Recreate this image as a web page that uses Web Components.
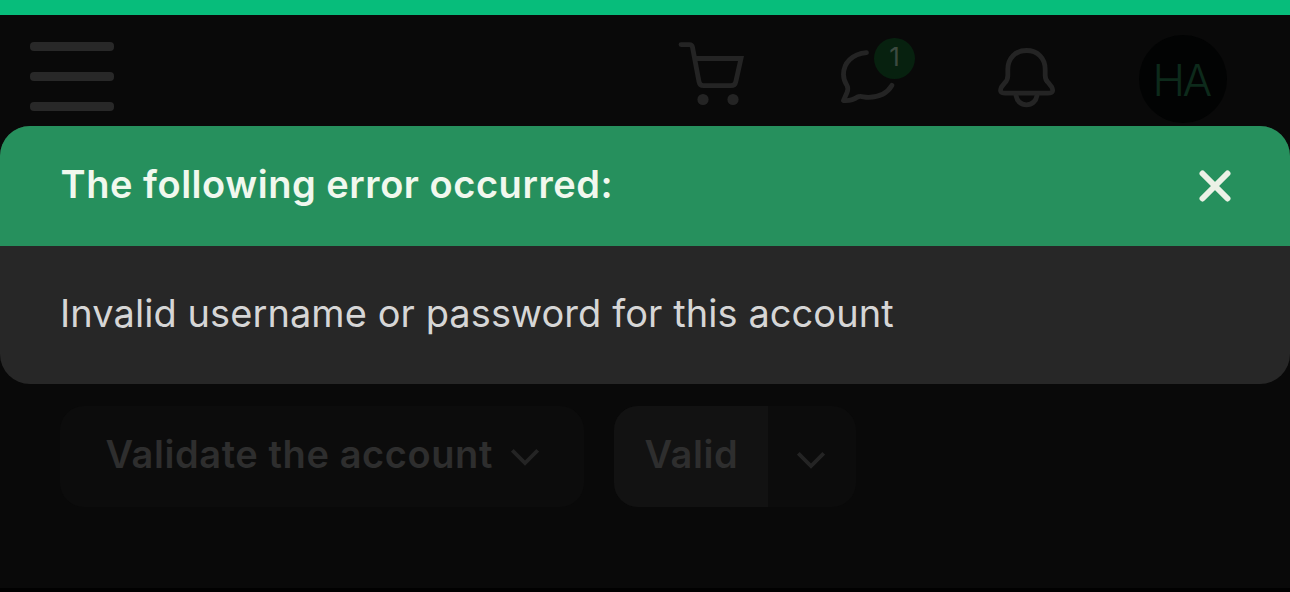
<!DOCTYPE html>
<html lang="en">
<head>
  <meta charset="utf-8">
  <title>Account</title>
  <style>
    body {
      margin: 0;
      background: #090909;
      font-family: Inter, "Liberation Sans", sans-serif;
      overflow: hidden;
    }
  </style>
</head>
<body>
  <account-page>
    <top-bar slot="header">
      <nav-icon name="cart"></nav-icon>
      <nav-icon name="chat"><count-badge>1</count-badge></nav-icon>
      <nav-icon name="bell"></nav-icon>
      <user-avatar>HA</user-avatar>
    </top-bar>
    <error-alert>
      <span slot="title">The following error occurred:</span>
      Invalid username or password for this account
    </error-alert>
    <action-bar>
      <drop-button>Validate the account</drop-button>
      <split-button>Valid</split-button>
    </action-bar>
  </account-page>

  <script>
    const CHEVRON = `
      <svg width="28" height="18" viewBox="0 0 28 18" fill="none" stroke="#242424" stroke-width="3.8">
        <path d="M1.3 2.3 14 15 26.7 2.3"/>
      </svg>`;

    const ICONS = {
      cart: `
        <path d="M8 8.600h8.500q2.500 0 3 2.600l6.500 34.500q.8 4 4.500 4h27.500q4 0 4.800-4L68 22.500H22" stroke-linejoin="miter"/>
        <circle cx="30" cy="63.500" r="5.600" fill="#242424" stroke="none"/>
        <circle cx="60" cy="63.500" r="5.600" fill="#242424" stroke="none"/>`,
      chat: `
        <path d="M36.500 16.700C22 18 13.500 27 13.500 38.500c0 4.500 1.500 8 3.500 11 1.500 2.500 1 4.500 0 7l-3.500 8c5.500.5 10-.5 14-3.500 3-1.500 6 .3 11 .3 11 0 19-4.300 23.500-12"/>`,
      bell: `
        <path d="M20.800 39.500V33.500C20.800 22 28.500 14.500 39.500 14.500S58.200 22 58.200 33.500v6q0 4.500 3 7l3.500 4.500q3 6.200-3.500 6.200H18q-6.500 0-3.500-6.200l3.500-4.500q2.800-2.500 2.800-7z"/>
        <path d="M29 59.500c1 6 5 9.300 10.500 9.300S49 65.500 50 59.500"/>`
    };

    class AccountPage extends HTMLElement {
      constructor() {
        super();
        this.attachShadow({ mode: 'open' });
        this.shadowRoot.innerHTML = `
          <style>
            :host {
              display: flex;
              flex-direction: column;
              box-sizing: border-box;
              height: 592px;
              border-top: 15px solid #07bd7b;
              border-bottom: 4px solid #010101;
            }
          </style>
          <slot name="header"></slot>
          <slot></slot>
        `;
      }
    }

    class TopBar extends HTMLElement {
      constructor() {
        super();
        this.attachShadow({ mode: 'open' });
        this.shadowRoot.innerHTML = `
          <style>
            :host {
              display: flex;
              justify-content: space-between;
              box-sizing: border-box;
              flex: none;
              height: 111px;
              padding: 21px 63px 0 30px;
            }
            .menu {
              display: flex;
              flex-direction: column;
              gap: 21px;
              width: 84px;
              padding: 6px 0 0;
              border: none;
              background: none;
            }
            .menu span {
              height: 9px;
              border-radius: 4px;
              background: #282828;
            }
            .tools {
              display: flex;
              align-items: center;
              gap: 77px;
              height: 80px;
            }
          </style>
          <button class="menu" aria-label="Menu"><span></span><span></span><span></span></button>
          <div class="tools"><slot></slot></div>
        `;
      }
    }

    class NavIcon extends HTMLElement {
      constructor() {
        super();
        this.attachShadow({ mode: 'open' });
      }

      connectedCallback() {
        this.shadowRoot.innerHTML = `
          <style>
            :host {
              display: block;
              position: relative;
              width: 80px;
              height: 80px;
            }
            svg {
              display: block;
            }
            ::slotted(*) {
              position: absolute;
              top: 2px;
              right: -5px;
            }
          </style>
          <svg width="80" height="80" viewBox="0 0 80 80" fill="none" stroke="#242424"
            stroke-width="4.8" stroke-linecap="round" stroke-linejoin="round">
            ${ICONS[this.getAttribute('name')]}
          </svg>
          <slot></slot>
        `;
      }
    }

    class CountBadge extends HTMLElement {
      constructor() {
        super();
        this.attachShadow({ mode: 'open' });
        this.shadowRoot.innerHTML = `
          <style>
            :host {
              display: block;
              box-sizing: border-box;
              width: 41px;
              height: 41px;
              border-radius: 50%;
              background: #07210f;
              color: #3c4a40;
              font-size: 26px;
              line-height: 38px;
              text-align: center;
            }
          </style>
          <slot></slot>
        `;
      }
    }

    class UserAvatar extends HTMLElement {
      constructor() {
        super();
        this.attachShadow({ mode: 'open' });
        this.shadowRoot.innerHTML = `
          <style>
            :host {
              display: block;
              width: 88px;
              height: 88px;
              margin: 6px 0 0 -5px;
              border-radius: 50%;
              background: #020303;
              color: #0d2a1b;
              font-size: 44px;
              font-weight: 300;
              line-height: 90px;
              letter-spacing: -2.5px;
              text-align: center;
              text-indent: -4px;
            }
          </style>
          <slot></slot>
        `;
      }
    }

    class ErrorAlert extends HTMLElement {
      constructor() {
        super();
        this.attachShadow({ mode: 'open' });
        this.shadowRoot.innerHTML = `
          <style>
            :host {
              display: block;
              flex: none;
              border-radius: 30px;
              overflow: hidden;
              background: #272727;
            }
            header {
              display: flex;
              align-items: center;
              justify-content: space-between;
              height: 120px;
              padding: 0 59px 0 60.5px;
              background: #26905d;
            }
            .title {
              padding-bottom: 4px;
              color: #f1f8ee;
              font-size: 38px;
              font-weight: 600;
              letter-spacing: 0.54px;
              white-space: nowrap;
            }
            button {
              display: flex;
              padding: 0;
              border: none;
              background: none;
            }
            .message {
              display: flex;
              align-items: center;
              box-sizing: border-box;
              height: 138px;
              padding: 0 60px 4px;
              color: #d6d6d6;
              font-size: 38px;
              letter-spacing: 0.07px;
              white-space: nowrap;
            }
          </style>
          <header role="alert">
            <div class="title"><slot name="title"></slot></div>
            <button aria-label="Close">
              <svg width="32" height="32" viewBox="0 0 32 32" stroke="#ecf1e6" stroke-width="6" stroke-linecap="round">
                <path d="M3.500 3.500l25 25M28.500 3.500l-25 25"/>
              </svg>
            </button>
          </header>
          <div class="message"><div><slot></slot></div></div>
        `;
      }
    }

    class ActionBar extends HTMLElement {
      constructor() {
        super();
        this.attachShadow({ mode: 'open' });
        this.shadowRoot.innerHTML = `
          <style>
            :host {
              display: flex;
              gap: 30px;
              padding: 22px 60px;
              color: #2e2e2e;
              font-size: 38px;
              font-weight: 600;
              letter-spacing: 0.58px;
              white-space: nowrap;
            }
          </style>
          <slot></slot>
        `;
      }
    }

    class DropButton extends HTMLElement {
      constructor() {
        super();
        this.attachShadow({ mode: 'open' });
        this.shadowRoot.innerHTML = `
          <style>
            :host {
              display: flex;
              align-items: center;
              justify-content: space-between;
              box-sizing: border-box;
              width: 524px;
              height: 101px;
              padding: 0 45px 6px 45.5px;
              border-radius: 24px;
              background: #0c0c0c;
            }
            svg {
              margin-top: 7px;
            }
          </style>
          <span><slot></slot></span>
          ${CHEVRON}
        `;
      }
    }

    class SplitButton extends HTMLElement {
      constructor() {
        super();
        this.attachShadow({ mode: 'open' });
        this.shadowRoot.innerHTML = `
          <style>
            :host {
              display: flex;
              width: 242px;
              height: 101px;
              border-radius: 24px;
              overflow: hidden;
              background: #0c0c0c;
            }
            .label {
              display: flex;
              align-items: center;
              box-sizing: border-box;
              width: 154px;
              padding: 0 0 6px 30.5px;
              background: #121212;
            }
            .arrow {
              display: flex;
              align-items: center;
              justify-content: center;
              flex: 1;
              padding: 6px 2px 0 0;
            }
          </style>
          <div class="label"><span><slot></slot></span></div>
          <div class="arrow">${CHEVRON}</div>
        `;
      }
    }

    customElements.define('account-page', AccountPage);
    customElements.define('top-bar', TopBar);
    customElements.define('nav-icon', NavIcon);
    customElements.define('count-badge', CountBadge);
    customElements.define('user-avatar', UserAvatar);
    customElements.define('error-alert', ErrorAlert);
    customElements.define('action-bar', ActionBar);
    customElements.define('drop-button', DropButton);
    customElements.define('split-button', SplitButton);
  </script>
</body>
</html>
